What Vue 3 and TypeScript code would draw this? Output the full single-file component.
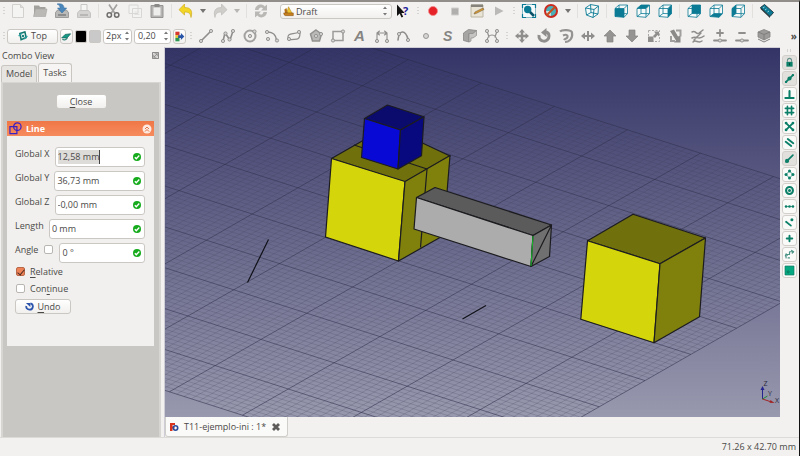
<script setup lang="ts">
import { ref } from 'vue'

type Item = { kind: 'icon' | 'sep' | 'grip' | 'menu'; icon?: string; label?: string; dim?: boolean }

const icon = (name: string, label: string, dim = false): Item => ({ kind: 'icon', icon: name, label, dim })
const sep: Item = { kind: 'sep' }
const grip: Item = { kind: 'grip' }
const menu = (label: string, dim = false): Item => ({ kind: 'menu', label, dim })

const G = '#8f8e8c'
const T = '#0b7a94'
const S = '#0c7f68'

const frame = `<path d="M2 5.500 6 2h8.500L11 5.500zM2 5.500v8l9 .8v-8.800M14.500 2v8.500L11 14.300M6 2v8.500l8.500.2M6 10.500 2 13.500" fill="#f6fafa" stroke="${T}" stroke-width=".8"/>`
const node = (x: number, y: number, r = 1.6) => `<circle cx="${x}" cy="${y}" r="${r}" fill="#d6d5d3" stroke="${G}" stroke-width=".9"/>`
const line = (d: string, w = 1.6, c = G) => `<path d="${d}" fill="none" stroke="${c}" stroke-width="${w}" stroke-linecap="round" stroke-linejoin="round"/>`
const dot = (x: number, y: number, r = 1.7) => `<circle cx="${x}" cy="${y}" r="${r}" fill="${S}"/>`
const tray = '<path d="M1.500 9.500 3.500 7h9l2 2.500V14.500h-13z" fill="#b9b9b8" stroke="#8d8d8d" stroke-width=".8"/><path d="M4 12h8" stroke="#707070" stroke-width="1.200"/>'

const icons: Record<string, string> = {
  file: '<path d="M2.500 1.500h8l3 3v10h-11z" fill="#f4f4f3" stroke="#d2d1ce"/><path d="M10.500 1.500v3h3" fill="#dddcd9" stroke="#d2d1ce"/>',
  folder: '<path d="M2 2.500h5L8 4h5.500v8H2z" fill="#a3a19e"/><path d="M3.500 6H15l-1.500 7.500h-12z" fill="#bbb9b6" stroke="#a6a4a1" stroke-width=".6"/>',
  save: tray + '<path d="M3 1c4-1 7 .5 7 4h2.700L8 10 3.500 5h2.700c0-1.500-1-3-3.200-4z" fill="#4b87ba" stroke="#32699c" stroke-width=".5"/>',
  print: '<path d="M5 1.500h6V8H5z" fill="#f5f5f4" stroke="#c8c7c5"/><path d="m1.500 10 2-2.500h9l2 2.500v4.500h-13z" fill="#d4d3d1" stroke="#bdbcba" stroke-width=".8"/><path d="M4 12h8" stroke="#9c9b99"/>',
  cut: '<path d="M4 1.500 10 10.500M12 1.500 6 10.500" stroke="#a2a19f" stroke-width="1.600"/><circle cx="4.300" cy="12" r="2.200" fill="none" stroke="#6f6e6c" stroke-width="1.500"/><circle cx="11.700" cy="12" r="2.200" fill="none" stroke="#6f6e6c" stroke-width="1.500"/>',
  copy: '<path d="M2 2h9v8.500H2zM5.500 5.500h9v9h-9z" fill="#f3f3f2" stroke="#d8d7d5"/><path d="M7.500 9h5M7.500 11.500h5" stroke="#e2e1df"/>',
  paste: '<path d="M2 2.500h12v12H2z" fill="#b5b4b2" stroke="#959492"/><path d="M4.500 4.500h7v8h-7z" fill="#eeeeec"/><path d="M5.500 1h5v3h-5z" fill="#8a8987"/>',
  undo: '<path d="M6.500 1v3.500c6 0 8.500 3 6.500 10C12.500 10.500 11 9 6.500 9v3L1 6.700z" fill="#f3d526" stroke="#cfae22" stroke-width=".7"/>',
  redo: '<path d="M9.500 1v3.500c-6 0-8.500 3-6.500 10C3.500 10.500 5 9 9.500 9v3L15 6.700z" fill="#cfcecb" stroke="#bdbcb9" stroke-width=".7"/>',
  refresh: '<path d="M2 7c.3-5.500 7-7 9.700-3.500L14 1.500v6H8l2-2c-1.500-2-4-1.200-4.500 1.500zM14 9c-.3 5.500-7 7-9.700 3.500L2 14.500v-6h6l-2 2c1.500 2 4 1.200 4.500-1.500z" fill="#b9b8b5"/>',
  whats: '<path d="M2 1.500v11.500l2.700-2.500 1.800 4 1.700-.8-1.800-3.700h3.300z" fill="#111"/><text x="8" y="12" font-family="Open Sans" font-weight="700" font-size="11" fill="#1d1d9c">?</text>',
  record: '<circle cx="8" cy="8" r="4.500" fill="#e52228" stroke="#f4898a" stroke-width=".8"/>',
  stop: '<path d="M4.500 5h7v7h-7z" fill="#b0afad" stroke="#d0cfcd"/>',
  macro: '<path d="M2 2h12v12H2z" fill="#e9e4d5" stroke="#bcb6a5"/><path d="M2 1.500h12v2.500H2z" fill="#85837c"/><path d="m5 11 1-2 8-4 1 1.500-8 4z" fill="#d99b33" stroke="#665237" stroke-width=".5"/>',
  play: '<path d="M4 3.500v9L12.500 8z" fill="#bab9b7"/>',
  fit: `<path d="M1.500 1.500h13v13h-13z" fill="#f8fbfb" stroke="#8bbac6"/><path d="M1.500 5v-3.500H5M11 1.500h3.500V5M14.500 11v3.500H11M5 14.500H1.500V11" fill="none" stroke="${T}" stroke-width="1.200"/><circle cx="6.700" cy="6.500" r="3.700" fill="${T}"/><path d="m9 9 4 4" stroke="#095269" stroke-width="2.500"/>`,
  style: '<circle cx="8" cy="8" r="5.500" fill="#49afb9"/><path d="M8 8v5.500a5.500 5.500 0 0 1-5.500-5.500z" fill="#c6e2e3"/><circle cx="8" cy="8" r="6" fill="none" stroke="#c92a20" stroke-width="2"/><path d="m3.500 12.500 9-9" stroke="#c8501f" stroke-width="2"/>',
  axo: `<path d="m1.500 5 5-3.500 8 1.500-4.500 3.500zM1.500 5l1 7 6.500 2.500 1-8M14.500 3l-.5 8-5 3.500M6.500 1.500l.5 8 7 1.500M7 9.500l-4.500 2.500" fill="#f8fbfb" stroke="${T}" stroke-width=".9"/>`,
  front: frame + `<path d="M2 5.500h9v8.800l-9-.8z" fill="${T}"/>`,
  top: frame + `<path d="M2 5.500 6 2h8.500L11 5.500z" fill="${T}"/>`,
  right: frame + `<path d="M11 5.500 14.500 2v8.500L11 14.300z" fill="${T}"/>`,
  rear: frame + `<path d="M6 2h8.500v8.700L6 10.500z" fill="${T}"/>`,
  bottom: frame + `<path d="m6 10.500 8.500.2L11 14.300l-9-.8z" fill="${T}"/>`,
  left: frame + `<path d="M2 5.500 6 2v8.500l-4 3z" fill="${T}"/>`,
  measure: `<path d="m1.500 4.500 4-3 9 8-3.500 4z" fill="${T}" stroke="#1f3a44" stroke-width="1"/><path d="m1.500 4.500 9.500 9v1.500L1.500 6z" fill="#26343a"/><path d="m4 5 1.500-1M6 7l1.500-1M8.500 9 10 8" stroke="#bfe5ea" stroke-width=".8"/>`,

  line: line('M3 13 13 3') + node(3, 13) + node(13, 3),
  wire: line('M3 13 5 5l5 7 3-9') + node(3, 13) + node(5.5, 5.5) + node(9.5, 11.5) + node(13, 3),
  circle: '<circle cx="8" cy="8" r="5.500" fill="none" stroke="#a2a19f" stroke-width="2"/>' + node(8, 8) + node(12.5, 3.5),
  arc: line('M4 4c5 0 8 3.500 8.500 8') + node(3, 4) + node(4, 11) + node(13, 12.5),
  spline: line('M2 11c-1-7 5-4 11-7M3 12c6-2 11 2 11-7', 1.2) + node(3, 11) + node(13, 4),
  polygon: '<path d="m8 2 5.500 4-2 7h-7l-2-7z" fill="#bab9b7" stroke="#92918f" stroke-width="1.500"/>' + node(8, 8) + node(13, 6),
  rect: '<path d="M3 3.500h10v9H3z" fill="none" stroke="#9c9b99" stroke-width="1.500"/>' + node(3, 12.5) + node(13, 3.5),
  text: '<text x="2" y="13" font-family="Liberation Sans" font-size="15" font-weight="700" font-style="italic" fill="#858482">A</text>',
  dimension: line('M3 13V5h10v8M5.500 3 3 5l2.500 2M10.500 3 13 5l-2.500 2', 1.1) + node(3, 13) + node(13, 13),
  bspline: line('M2 12c1-10 7-11 10-1') + node(3, 6) + node(12, 12),
  point: node(8, 8, 2.5),
  string: '<text x="3" y="12.500" font-family="Liberation Sans" font-size="14" font-weight="700" font-style="italic" fill="#868583">S</text>',
  facebinder: '<path d="m1.500 5 5-3.500 8 1L11 5.500H7v8.500l-5.500-1.500z" fill="#a6a5a3" stroke="#878684" stroke-width=".8"/><path d="M7 5.500h4l3.500-3v5L11 10H9v3l-2 1z" fill="#c5c4c2" stroke="#8c8b89" stroke-width=".7"/>',
  bezier: line('M3 13c1-8 9-8 10 0M3 3l2 6M13 3l-2 6', 1.2) + node(3, 3) + node(13, 3) + node(3, 13) + node(13, 13),
  move: `<path d="m8 1 3 3.500H9.200v2.300h2.300V5L15 8l-3.500 3V9.200H9.200v2.300H11L8 15l-3-3.500h1.800V9.200H4.500V11L1 8l3.500-3v1.800h2.300V4.500H5z" fill="${G}"/>`,
  rotate: '<path d="M3 7c-1 8 10 8 10 1 0-3-2-4-4-4" fill="none" stroke="#8f8e8c" stroke-width="3"/><path d="M10.500 0v9L5 4.500z" fill="#8f8e8c"/>',
  offset: '<path d="M2 3.500c2-2 12-2 12 1.500 1 5-2.500 9-7 9M5 7.500c3-1.500 5-.5 4.500 1.500S7 10.500 6 12" fill="none" stroke="#959492" stroke-width="2.200"/>',
  trim: `<path d="m1 8 4-3.500V7h2V3h2v4h2V4.500L15 8l-4 3.500V9H9v4H7V9H5v2.500z" fill="${G}"/>`,
  up: '<path d="m8 2 6 6h-3v6H5V8H2z" fill="#959492" stroke="#868583" stroke-width=".7"/>',
  down: '<path d="m8 14 6-6h-3V2H5v6H2z" fill="#959492" stroke="#868583" stroke-width=".7"/>',
  scale: '<path d="M2.500 2.500h11v11h-11z" fill="none" stroke="#aaa9a7" stroke-dasharray="2 1.500"/><path d="M2 8.500h5.500V14H2zM8 3.500h5v5L11.500 7 9 10 7 8l2.500-2.500z" fill="#8f8e8c"/>',
  edit: '<path d="m2 3 4-1.500 4 7 2.500-1v7H6l2-2z" fill="#8b8a88"/><path d="M8 2.500h4.500v6M3 8v5h4" fill="none" stroke="#a09f9d" stroke-width="2"/>',
  convert: line('M2 4c4-2 4 3 7 1l4-3M2 10c5-3 6 3 12-2M3 14c3-3 5 2 9-1M4 12l7-7', 1.5),
  addpoint: line('M2 12.500h12M8 2v6M5 5h6', 1.8) + node(8, 12.5),
  delpoint: line('M2 12.500h12M5 5h6', 1.8) + node(8, 12.5),
  shape2d: '<path d="m2 4 6-2.500L14 4v5l-6 3-6-3z" fill="#9c9b99" stroke="#858482" stroke-width=".8"/><path d="m2 4 6 2.500L14 4M8 6.500V12M2 11l6 3 6-3" fill="none" stroke="#7f7e7c"/>',

  lock: `<path d="M5 7V5a3 3 0 0 1 6 0v2" fill="none" stroke="#66908a" stroke-width="1.500"/><path d="M3.500 7h9v7h-9z" fill="${S}"/><path d="M8 9v3" stroke="#0a4539" stroke-width="1.500"/>`,
  mid: line('M3 13 13 3', 2.4, S) + dot(8, 8, 3) + dot(3, 13) + dot(13, 3),
  perp: line('M8 3v10M2 13h12', 3, S),
  grid: line('M5 2v12M11 2v12M2 5h12M2 11h12', 2.4, S),
  cross: line('m3 3 10 10M13 3 3 13', 2.6, S) + dot(3, 3, 2) + dot(13, 3, 2) + dot(3, 13, 2) + dot(13, 13, 2),
  parallel: line('m2.500 7 8 6M5.500 3l8 6', 2.8, S),
  end: line('M3 13 13 3', 2.4, S) + dot(4.5, 11.5, 3),
  angle: '<path d="m8 3 5 5-5 5-5-5z" fill="none" stroke="#80bcae" stroke-width="1.500"/>' + dot(8, 3, 2.2) + dot(8, 13, 2.2) + dot(3, 8, 2.2) + dot(13, 8, 2.2),
  center: `<circle cx="8" cy="8" r="5" fill="none" stroke="${S}" stroke-width="3"/>` + dot(8, 8, 2.2),
  ext: line('M2 8h12', 1, S) + dot(3, 8, 1.9) + dot(8, 8, 1.9) + dot(13, 8, 1.9),
  near: line('m3 7 7 5.500', 2.6, S) + dot(11.5, 4, 2.2),
  ortho: line('M8 4v8M4 8h8', 2.8, S),
  dims: line('M3 13V8M3 8h5V4h5M2 10l1-3 2 2M11 2l3 2-2 2M6 13h2', 1.7, '#4b9385'),
  plane: '<path d="M1.500 1.500h13v13h-13z" fill="#04a981" stroke="#08775d"/><circle cx="6" cy="10" r="1.500" fill="none" stroke="#07644f"/>'
}

const mainStart: Item[] = [
  icon('file', 'New'), icon('folder', 'Open'), icon('save', 'Save'), icon('print', 'Print'), sep,
  icon('cut', 'Cut'), icon('copy', 'Copy'), icon('paste', 'Paste'), sep,
  icon('undo', 'Undo'), menu('Undo history'), icon('redo', 'Redo'), menu('Redo history', true), sep,
  icon('refresh', 'Refresh')
]
const mainEnd: Item[] = [
  icon('whats', "What's this?"), grip,
  icon('record', 'Record macro'), icon('stop', 'Stop recording'), icon('macro', 'Macros'), icon('play', 'Run macro'), grip,
  icon('fit', 'Fit all'), icon('style', 'Draw style'), menu('Draw styles'), sep,
  icon('axo', 'Axonometric'), sep,
  icon('front', 'Front'), icon('top', 'Top'), icon('right', 'Right'), sep,
  icon('rear', 'Rear'), icon('bottom', 'Bottom'), icon('left', 'Left'), sep,
  icon('measure', 'Measure')
]
const draftTools: Item[] = [
  icon('line', 'Line'), icon('wire', 'Wire'), icon('circle', 'Circle'), icon('arc', 'Arc'), icon('spline', 'Ellipse'),
  icon('polygon', 'Polygon'), icon('rect', 'Rectangle'), icon('text', 'Text'), icon('dimension', 'Dimension'),
  icon('bspline', 'B-spline'), icon('point', 'Point'), icon('string', 'Shape string'), icon('facebinder', 'Facebinder'),
  icon('bezier', 'Bezier curve'), grip,
  icon('move', 'Move'), icon('rotate', 'Rotate'), icon('offset', 'Offset'), icon('trim', 'Trimex'), icon('up', 'Upgrade'),
  icon('down', 'Downgrade'), icon('scale', 'Scale'), icon('edit', 'Edit'), icon('convert', 'Wire to B-spline'),
  icon('addpoint', 'Add point'), icon('delpoint', 'Remove point'), icon('shape2d', 'Shape 2D view')
]
const snaps = [
  ['lock', 'Lock'], ['mid', 'Midpoint'], ['perp', 'Perpendicular'], ['grid', 'Grid'], ['cross', 'Intersection'],
  ['parallel', 'Parallel'], ['end', 'Endpoint'], ['angle', 'Angle'], ['center', 'Center'], ['ext', 'Extension'],
  ['near', 'Near'], ['ortho', 'Ortho'], ['dims', 'Dimensions'], ['plane', 'Working plane']
]
const pressed = new Set(['lock', 'mid', 'end'])

const fields = ref([
  { id: 'gx', label: 'Global X', value: '12,58 mm' },
  { id: 'gy', label: 'Global Y', value: '36,73 mm' },
  { id: 'gz', label: 'Global Z', value: '-0,00 mm' },
  { id: 'len', label: 'Length', value: '0 mm' }
])
const angle = ref('0 °')
const lockAngle = ref(false)
const relative = ref(true)
const continueMode = ref(false)
const lineWidth = ref('2px')
const textSize = ref('0,20')

// Ground grid: ten major cells each way, ten minor steps per major cell.
const origin = [288.3, 389]
const u = [73.1, 23.4]
const v = [45.8, -26.2]
const at = (a: number, b: number) => `${(origin[0] + a * u[0] + b * v[0]).toFixed(1)} ${(origin[1] + a * u[1] + b * v[1]).toFixed(1)}`
let minor = ''
let major = ''
for (let i = 0; i <= 100; i++) {
  const p = i / 10
  const d = `M${at(p - 7, -1)}L${at(p - 7, 9)}M${at(-7, p - 1)}L${at(3, p - 1)}`
  if (i % 10) minor += d
  else major += d
}
</script>

<template>
  <div class="window">
    <header class="toolbars">
      <div class="bar" role="toolbar" aria-label="Main">
        <span class="grip"></span>
        <template v-for="(t, i) in mainStart" :key="i">
          <button v-if="t.kind === 'icon'" class="tool" :aria-label="t.label"><svg viewBox="0 0 16 16" v-html="icons[t.icon!]"></svg></button>
          <button v-else-if="t.kind === 'menu'" class="drop" :class="{ dim: t.dim }" :aria-label="t.label"><i></i></button>
          <span v-else class="sep"></span>
        </template>
        <div class="workbench">
          <svg viewBox="0 0 16 16"><path d="M8 1 14 12H5z" fill="#efc52e" stroke="#a87c19" stroke-width=".7" /><path d="m2 5 3-2 2 8H3z" fill="#b5731b" /><path d="M1 10h14v4H4c-2 0-3-2-3-4z" fill="#c8811e" stroke="#7c4c10" stroke-width=".7" /></svg>
          <select aria-label="Workbench"><option>Draft</option></select>
          <svg class="updown" viewBox="0 0 6 12"><path d="m1 4 2-2.500L5 4zM1 8l2 2.500L5 8z" fill="#777" /></svg>
        </div>
        <template v-for="(t, i) in mainEnd" :key="i">
          <button v-if="t.kind === 'icon'" class="tool" :aria-label="t.label"><svg viewBox="0 0 16 16" v-html="icons[t.icon!]"></svg></button>
          <button v-else-if="t.kind === 'menu'" class="drop" :aria-label="t.label"><i></i></button>
          <span v-else :class="t.kind"></span>
        </template>
      </div>
      <div class="bar" role="toolbar" aria-label="Draft">
        <span class="grip"></span>
        <div class="tray">
          <button class="push plane">
            <svg viewBox="0 0 16 16"><path d="m3 4 8-2.500 2 9L5 14z" fill="none" stroke="#12776f" stroke-width="2.500" /><path d="m1 8 5-4M10 13l5-5" stroke="#2aa0a0" stroke-width="2" /><circle cx="8" cy="8" r="2" fill="#1c8580" /></svg>
            Top
          </button>
          <button class="push mini" aria-label="Construction mode"><svg viewBox="0 0 16 16"><path d="m1 10 5-5 8-1-5 6z" fill="#159a86" stroke="#0b6257" /><path d="M2 12c3 2 6 0 7-2" fill="none" stroke="#3b8a80" stroke-width="2" /></svg></button>
          <button class="push swatch black" aria-label="Line color"></button>
          <button class="push swatch grey" aria-label="Face color"></button>
          <div class="spin thin"><input v-model="lineWidth" aria-label="Line width" /><svg class="updown" viewBox="0 0 6 12"><path d="m1 4 2-2.500L5 4zM1 8l2 2.500L5 8z" fill="#777" /></svg></div>
          <div class="spin"><input v-model="textSize" aria-label="Text size" /><svg class="updown" viewBox="0 0 6 12"><path d="m1 4 2-2.500L5 4zM1 8l2 2.500L5 8z" fill="#777" /></svg></div>
          <button class="push mini" aria-label="Apply style"><svg viewBox="0 0 16 16"><path d="M2 1h6v5H2z" fill="#d7372f" /><path d="M2 6h6v4H2z" fill="#e8c32c" /><path d="M2 10h6v5H2z" fill="#2d9650" /><path d="M6 6h4V3l5 5-5 5v-3H6z" fill="#2753a8" /></svg></button>
        </div>
        <span class="grip"></span>
        <template v-for="(t, i) in draftTools" :key="i">
          <button v-if="t.kind === 'icon'" class="tool" :aria-label="t.label"><svg viewBox="0 0 16 16" v-html="icons[t.icon!]"></svg></button>
          <span v-else :class="t.kind"></span>
        </template>
        <button class="more" aria-label="More tools">»</button>
      </div>
    </header>

    <main class="work">
      <aside class="dock">
        <div class="dock-title">
          <span>Combo View</span>
          <button aria-label="Float panel"><svg viewBox="0 0 8 8"><path d="M.5.5h7v7h-7z" fill="#e4e2df" stroke="#777" /><path d="m2 6 4-4M3 2h3v3M2 3v3h3" fill="none" stroke="#777" stroke-width=".8" /></svg></button>
        </div>
        <div class="tabs" role="tablist">
          <button role="tab" aria-selected="false">Model</button>
          <button role="tab" aria-selected="true" class="active">Tasks</button>
        </div>
        <div class="pane">
          <button class="push close"><span><u>C</u>lose</span></button>
          <section class="task">
            <h2>
              <svg class="logo" viewBox="0 0 14 14"><path d="M1 5h7.500v7.500H1z" fill="none" stroke="#3a21c4" stroke-width="1.300" /><circle cx="9" cy="5" r="4" fill="none" stroke="#3a21c4" stroke-width="1.300" /></svg>
              <span>Line</span>
              <button aria-label="Collapse"><svg viewBox="0 0 10 10"><circle cx="5" cy="5" r="4.500" fill="#fde9df" /><path d="m3 5 2-2 2 2M3 7.500l2-2 2 2" fill="none" stroke="#e2764a" stroke-width="1" /></svg></button>
            </h2>
            <form @submit.prevent>
              <div v-for="f in fields" :key="f.id" class="row">
                <label :for="f.id">{{ f.label }}</label>
                <div class="field">
                  <span v-if="f.id === 'gx'" class="selection"><input :id="f.id" v-model="f.value" /></span>
                  <input v-else :id="f.id" v-model="f.value" />
                  <svg class="ok" viewBox="0 0 8 8"><circle cx="4" cy="4" r="4" fill="#16ab1c" /><path d="m1.800 4.200 1.500 1.600 3-3.300" fill="none" stroke="#fff" stroke-width="1.300" /></svg>
                </div>
              </div>
              <div class="row">
                <label for="angle">Angle</label>
                <input v-model="lockAngle" class="lock" type="checkbox" aria-label="Lock angle" />
                <div class="field">
                  <input id="angle" v-model="angle" />
                  <svg class="ok" viewBox="0 0 8 8"><circle cx="4" cy="4" r="4" fill="#16ab1c" /><path d="m1.800 4.200 1.500 1.600 3-3.300" fill="none" stroke="#fff" stroke-width="1.300" /></svg>
                </div>
              </div>
              <div class="options">
                <label class="check"><input v-model="relative" type="checkbox" /><span><u>R</u>elative</span></label>
                <label class="check"><input v-model="continueMode" type="checkbox" /><span>Con<u>t</u>inue</span></label>
              </div>
              <button class="push undo" type="button">
                <svg viewBox="0 0 10 10"><path d="M6 1.500c4 1 3.500 7-1 7-2.500 0-4-2-3.500-4" fill="none" stroke="#2b54ac" stroke-width="2" /><path d="M1 1h5v4.500z" fill="#2b54ac" /></svg>
                <span><u>U</u>ndo</span>
              </button>
            </form>
          </section>
        </div>
      </aside>

      <section class="document">
        <svg class="view" viewBox="165 48 615 369" preserveAspectRatio="xMidYMid slice" role="img" aria-label="3D view">
          <defs>
            <linearGradient id="sky" x1="0" y1="0" x2="0" y2="1"><stop offset="0" stop-color="#343467" /><stop offset="1" stop-color="#9898ae" /></linearGradient>
            <linearGradient id="fade" gradientUnits="userSpaceOnUse" x1="0" y1="48" x2="0" y2="417"><stop offset="0" stop-color="#2f3043" stop-opacity=".22" /><stop offset="1" stop-color="#34354e" stop-opacity=".34" /></linearGradient>
            <linearGradient id="fade-major" gradientUnits="userSpaceOnUse" x1="0" y1="48" x2="0" y2="417"><stop offset="0" stop-color="#24253c" stop-opacity=".4" /><stop offset="1" stop-color="#2b2c48" stop-opacity=".55" /></linearGradient>
          </defs>
          <rect x="165" y="48" width="615" height="369" fill="url(#sky)" />
          <path :d="minor" class="minor" />
          <path :d="major" class="major" />
          <g class="solid">
            <path d="m331.500 158.500 56-32 62.500 29.500-45 26z" fill="#70700d" />
            <path d="m331.500 158.500 73.500 23-6.500 79.500-73-24z" fill="#d5d50c" />
            <path d="m405 181.500 45-26-6.500 80-45 25.500z" fill="#80800d" />
            <path d="m354 145 73 24-6.500 78.500" class="seam" />
            <path d="m364.500 118.500 23-13.500 36.500 11.700-23.500 13.300z" fill="#0b0b6e" />
            <path d="m364.500 118.500 36 11.500-2.500 39-36.500-11.500z" fill="#0909d5" />
            <path d="m400.500 130 23.500-13.300-2.500 39L398 169z" fill="#08087f" />
            <path d="m416.500 197.500 18.500-10 116.500 37.500-18.500 10.500z" fill="#5b5b5b" />
            <path d="M416.500 197.500 533 235.500l-2 31-117-37.500z" fill="#acacac" />
            <path d="m533 235.500 18.500-10.500-2 31.500-18.500 10zM551.500 225 531 266.500" fill="#707070" />
            <path d="m587.500 240.700 45.500-26.500 72.500 23.800-45.500 25.700z" fill="#70700d" />
            <path d="m587.500 240.700 72.500 23-6 79-73.200-23.500z" fill="#d5d50c" />
            <path d="m660 263.700 45.500-25.700-6 78.800-45.500 25.900z" fill="#80800d" />
          </g>
          <path d="m533 236-2 30" stroke="#16b929" />
          <path d="m268.500 239.500-21 43M462.500 319l23.500-13.500" stroke="#111118" stroke-width="1.200" />
          <g class="axes">
            <path d="M762.500 399v-12" stroke="#24248f" /><path d="m760.500 390 2-4 2 4z" fill="#24248f" />
            <path d="m762.500 399 5-3" stroke="#238b35" /><path d="m762.500 399 9 3" stroke="#a12424" /><path d="m774.500 403-5-.2 1-2.800z" fill="#a12424" />
            <text x="763.500" y="386">Z</text><text x="768" y="396">Y</text><text x="775" y="403">X</text>
          </g>
        </svg>
        <div class="doc-tabs">
          <div class="doc-tab">
            <svg viewBox="0 0 10 10"><path d="M1 1h5v2H3.500v1.500h2v2h-2V9H1z" fill="#d8341d" /><circle cx="6.500" cy="6" r="2.200" fill="none" stroke="#284b9c" stroke-width="1.600" /></svg>
            <span>T11-ejemplo-ini : 1*</span>
            <button aria-label="Close document"><svg viewBox="0 0 10 10"><path d="m2 2 6 6M8 2 2 8" stroke="#5d5c5a" stroke-width="2.800" /></svg></button>
          </div>
        </div>
      </section>

      <nav class="snaps" role="toolbar" aria-label="Snap">
        <span class="hgrip"></span>
        <button v-for="s in snaps" :key="s[0]" :aria-label="s[1]" :class="{ on: pressed.has(s[0]) }"><svg viewBox="0 0 16 16" v-html="icons[s[0]]"></svg></button>
      </nav>
    </main>

    <footer class="status">71.26 x 42.70 mm</footer>
  </div>
</template>

<style>
body { background: #f1f0ee; }
</style>

<style scoped>
.window {
  display: flex;
  flex-direction: column;
  min-height: 100vh;
  box-sizing: border-box;
  border-top: 2px solid #918e8a;
  border-right: 1px solid #111;
  background: #f2f1ef;
  color: #4a4947;
  font: 9px/14px "Open Sans", "Noto Sans", sans-serif;
  overflow: hidden;
}
.window * { box-sizing: border-box; }
button, input, select { font: inherit; color: inherit; padding: 0; margin: 0; border: 0; background: none; min-width: 0; }
input:focus, select:focus { outline: none; }
svg { display: block; flex: none; }
u { text-underline-offset: 2px; }

.toolbars { display: flex; flex-direction: column; gap: 7px; height: 45px; }
.bar { display: flex; align-items: center; height: 18px; }
.tool { display: flex; flex: none; justify-content: center; width: 22px; }
.tool svg { width: 16px; height: 16px; overflow: visible; }
.sep { flex: none; width: 1px; height: 14px; margin: 0 3px; background: #e2e0dd; }
.grip { flex: none; width: 2px; height: 8px; margin: 0 3px; background: repeating-linear-gradient(#d6d4d1 0 1px, transparent 1px 3px); }
.bar > .grip:first-child { margin-right: 2px; }
.drop { display: flex; flex: none; justify-content: center; width: 12px; }
.drop i { border: 3px solid transparent; border-top: 4px solid #757472; border-bottom: 0; }
.drop.dim i { border-top-color: #b8b6b3; }

.workbench, .spin, .push {
  display: flex;
  flex: none;
  align-items: center;
  border: 1px solid #cbc8c4;
  border-radius: 3px;
  background: linear-gradient(#fff, #f1f0ee);
}
.workbench { width: 112px; height: 15px; margin-left: 8px; padding: 0 3px 0 2px; }
.workbench svg:first-child { width: 11px; height: 11px; margin-right: 2px; }
.workbench select { flex: 1; height: 13px; appearance: none; }
.updown { width: 6px; height: 12px; }

.tray { display: flex; align-items: center; gap: 2px; padding-right: 1px; }
.push { justify-content: center; height: 15px; }
.plane { width: 51px; gap: 3px; }
.plane svg { width: 10px; height: 10px; }
.mini { width: 13px; }
.mini svg { width: 11px; height: 11px; }
.swatch { width: 12px; height: 13px; border-radius: 2px; }
.black { background: #000; }
.grey { background: #c9c9c9; }
.spin { width: 37px; height: 15px; padding: 0 1px 0 3px; background: #fff; }
.spin.thin { width: 29px; padding-left: 2px; }
.spin input { flex: 1; width: 0; height: 13px; }
.more { flex: none; margin-left: auto; padding-right: 2px; font-size: 10px; font-weight: 700; }

.work { display: flex; flex: 1; }
.dock { display: flex; flex: none; flex-direction: column; width: 161px; margin-right: 3px; padding-left: 1px; }
.dock-title { display: flex; align-items: center; justify-content: space-between; height: 16px; padding: 1px 2px 0 1px; }
.dock-title svg { width: 7px; height: 7px; }
.tabs { display: flex; align-items: flex-end; gap: 1px; height: 19px; }
.tabs button { height: 17px; padding: 0 4px; border: 1px solid #c9c6c2; border-bottom: 0; border-radius: 3px 3px 0 0; background: #e7e5e2; }
.tabs .active { height: 19px; background: #f6f5f4; }
.pane { display: flex; flex: 1; flex-direction: column; padding: 11px 6px 12px; border: 1px solid #d8d6d3; border-width: 1px 2px 0; background: #c9c7c4; }
.close { align-self: center; width: 51px; height: 15px; }
.task { min-height: 225px; margin: 12px -1px 0 -2px; background: #f1f0ee; }
.task h2 { display: flex; align-items: center; height: 15px; margin: 0; padding: 0 2px; gap: 4px; background: linear-gradient(#f07746, #f68b5d); color: #fff; font: inherit; font-weight: 700; }
.task h2 span { flex: 1; }
.logo { width: 13px; height: 13px; }
.task h2 button svg { width: 10px; height: 10px; }
form { display: flex; flex-direction: column; gap: 4px; padding: 11px 9px 0 8px; }
.row { display: flex; align-items: flex-start; gap: 5px; }
.field { display: flex; flex: 1; align-items: center; height: 20px; padding: 0 3px 0 2px; border: 1px solid #cbc8c4; border-radius: 3px; background: #fff; }
.field > input { flex: 1; width: 0; }
.selection { flex: 1; }
.selection input { width: 42px; border-right: 1px solid #444; background: #dedcd9; }
.ok { width: 8px; height: 8px; }
input[type='checkbox'] { display: grid; flex: none; place-items: center; width: 9px; height: 9px; border: 1px solid #b9b6b2; border-radius: 2px; background: #fff; appearance: none; }
input[type='checkbox']:checked { border-color: #b9694a; background: #ee8257; }
input[type='checkbox']:checked::before { content: ''; width: 3px; height: 6px; border: solid #4c2c20; border-width: 0 1px 1px 0; transform: rotate(40deg); }
.lock { margin: 2px 1px 0; }
.options { display: flex; flex-direction: column; gap: 4px; margin-top: -2px; }
.check { display: flex; align-items: center; gap: 5px; height: 13px; padding-left: 1px; }
.undo { align-self: flex-start; width: 56px; gap: 3px; }
.undo svg { width: 9px; height: 9px; }

.document { display: flex; flex: 1; flex-direction: column; min-width: 0; border-left: 1px solid #cfcdd6; }
.view { flex: 1; width: 100%; min-height: 0; border-top: 1px solid #cfcdd6; }
.minor, .major { fill: none; stroke: url(#fade); stroke-width: .6; }
.major { stroke: url(#fade-major); stroke-width: 1; }
.solid path { stroke: #1c1c20; stroke-width: 1.2; stroke-linejoin: round; }
.seam { fill: none; }
.axes text { font: 7px "Open Sans", sans-serif; fill: #29293b; }
.doc-tabs { display: flex; height: 20px; }
.doc-tab { display: flex; align-items: center; gap: 5px; padding: 0 6px 0 3px; border: 1px solid #d0ceca; border-top: 0; border-radius: 0 0 3px 3px; background: #fafaf9; }
.doc-tab svg { width: 10px; height: 10px; }

.snaps { display: flex; flex: none; flex-direction: column; align-items: center; gap: 1px; width: 19px; padding-top: 2px; }
.snaps button { display: flex; align-items: center; justify-content: center; width: 15px; height: 15px; border: 1px solid #d3d0cc; border-radius: 3px; background: #fafaf9; }
.snaps .on { background: #e2e0dd; }
.snaps svg { width: 11px; height: 11px; }
.hgrip { width: 6px; height: 3px; margin-bottom: 2px; background: repeating-linear-gradient(90deg, #d6d4d1 0 1px, transparent 1px 3px); }

.status { height: 19px; padding: 2px 3px 0 0; border-top: 1px solid #dddbd8; text-align: right; }
</style>
